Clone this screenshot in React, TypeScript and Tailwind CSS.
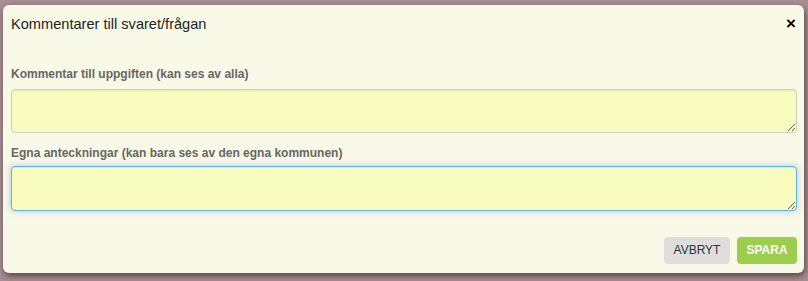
export default function App() {
  return (
    <div className="h-[281px] w-[808px] overflow-hidden bg-[#a68e92] pl-[3px] pt-[5px] font-['Liberation_Sans',Arial,sans-serif]">
      <div className="flex h-[268px] w-[801px] flex-col rounded-[6px] bg-[#f9f9e7] pl-[8px] pr-[7px] shadow-[1px_3px_6px_rgba(40,20,20,0.6)]">
        <div className="box-content flex h-[20px] items-center justify-between pt-[9px]">
          <h3 className="text-[14.6px] leading-[20px] text-[#222]">Kommentarer till svaret/frågan</h3>
          <button className="mr-[1px] text-[17px] font-bold leading-[20px] text-black">×</button>
        </div>

        <label className="mt-[32px] text-[12px] font-bold leading-[16px] text-[#666]">
          Kommentar till uppgiften (kan ses av alla)
        </label>
        <textarea className="mt-[7px] h-[44px] w-[786px] rounded-[4px] border border-[#cfcfc0] bg-[#f8fcbf] shadow-[inset_0_1px_1px_rgba(0,0,0,0.075)] outline-none" />

        <label className="mt-[12px] text-[12px] font-bold leading-[16px] text-[#666]">
          Egna anteckningar (kan bara ses av den egna kommunen)
        </label>
        <textarea className="mt-[5px] h-[45px] w-[786px] rounded-[4px] border border-[#66afe9] bg-[#f8fcbf] shadow-[inset_0_1px_1px_rgba(0,0,0,0.075),0_0_6px_rgba(102,175,233,0.6)] outline-none" />

        <div className="mt-[26px] flex justify-end gap-[7px]">
          <button className="h-[27px] w-[66px] rounded-[4px] bg-[#dedede] text-[12px] leading-[27px] text-[#333]">AVBRYT</button>
          <button className="h-[27px] w-[60px] rounded-[4px] bg-[#9ccd4c] text-[12px] font-bold leading-[27px] text-white">SPARA</button>
        </div>
      </div>
    </div>
  );
}
